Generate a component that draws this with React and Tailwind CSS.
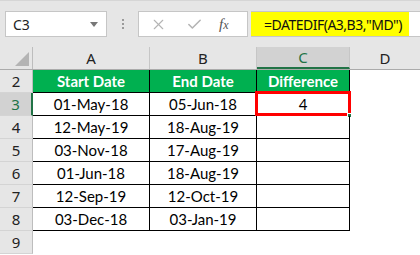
import { X, Check } from 'lucide-react';

const cols = [
  { key: 'A', w: 'w-[117px]' },
  { key: 'B', w: 'w-[107px]' },
  { key: 'C', w: 'w-[93px]' },
];

const rows = [
  ['01-May-18', '05-Jun-18', '4'],
  ['12-May-19', '18-Aug-19', ''],
  ['03-Nov-18', '17-Aug-19', ''],
  ['01-Jun-18', '18-Aug-19', ''],
  ['12-Sep-19', '12-Oct-19', ''],
  ['03-Dec-18', '03-Jan-19', ''],
];

const cellFont = { fontFamily: 'Lato, "Open Sans", sans-serif' };
const uiFont = { fontFamily: '"Noto Sans", "Open Sans", sans-serif' };

function RowHead({ n, active }) {
  return (
    <div
      style={uiFont}
      className={`w-[33px] h-[23px] shrink-0 flex items-center justify-center text-[15px] border-b border-[#d4d4d4] ${
        active
          ? 'bg-[#d2d2d2] text-[#217346] border-r-2 border-r-[#217346]'
          : 'bg-[#e6e6e6] text-[#222] border-r border-r-[#bdbdbd]'
      }`}
    >
      {n}
    </div>
  );
}

export default function App() {
  return (
    <div className="w-[420px] h-[255px] overflow-hidden bg-white select-none">
      {/* formula bar */}
      <div className="h-[47px] bg-[#e6e6e6] border-t border-[#d6d6d6] flex items-center pl-[5px]">
        <div className="w-[102px] h-[26px] bg-white border border-[#c6c6c6] flex items-center justify-between pl-[7px] pr-[8px]">
          <span style={uiFont} className="text-[14px] text-[#222]">C3</span>
          <svg width="8" height="5" viewBox="0 0 8 5"><path d="M0 0h8L4 5z" fill="#777" /></svg>
        </div>
        <div className="w-[31px] flex flex-col items-center gap-[2px]">
          <span className="w-[2px] h-[2px] bg-[#9a9a9a]" />
          <span className="w-[2px] h-[2px] bg-[#9a9a9a]" />
          <span className="w-[2px] h-[2px] bg-[#9a9a9a]" />
        </div>
        <div className="w-[110px] h-[26px] bg-white border border-[#c6c6c6] flex items-center pl-[11px]">
          <X size={17} strokeWidth={1.6} className="text-[#b4b4b4]" />
          <Check size={17} strokeWidth={2.2} className="ml-[19px] text-[#b4b4b4]" />
          <span className="ml-[16px] text-[15px] italic text-[#555]" style={{ fontFamily: '"Liberation Serif", serif' }}>
            f<span className="text-[12px]">x</span>
          </span>
        </div>
        <div className="ml-[3px] flex-1 h-[26px] bg-white border-y border-[#c6c6c6] flex">
          <div style={uiFont} className="w-[158px] bg-[#ffff00] flex items-center pl-[13px] text-[14px] tracking-[-0.5px] text-[#111] whitespace-nowrap">
            =DATEDIF(A3,B3,"MD")
          </div>
        </div>
      </div>

      {/* column headers */}
      <div className="flex h-[23px] bg-[#e6e6e6] border-b border-[#ababab]">
        <div className="w-[33px] shrink-0 border-r border-[#bdbdbd] flex items-end justify-end pr-[3px] pb-[3px]">
          <svg width="14" height="14" viewBox="0 0 14 14"><path d="M14 0v14H0z" fill="#b4b4b4" /></svg>
        </div>
        {cols.map((c) => (
          <div
            key={c.key}
            style={uiFont}
            className={`${c.w} shrink-0 flex items-center justify-center text-[15px] border-r border-[#c6c6c6] ${
              c.key === 'C' ? 'bg-[#d2d2d2] text-[#217346] border-b-2 border-b-[#217346]' : 'text-[#222]'
            }`}
          >
            {c.key}
          </div>
        ))}
        <div style={uiFont} className="flex-1 flex items-center justify-center text-[15px] text-[#222]">D</div>
      </div>

      {/* table head */}
      <div className="flex">
        <RowHead n={2} />
        {['Start Date', 'End Date', 'Difference'].map((t, i) => (
          <div
            key={t}
            style={cellFont}
            className={`${cols[i].w} h-[23px] shrink-0 bg-[#00b050] text-white font-bold text-[15px] flex items-center justify-center border-r border-b border-black`}
          >
            {t}
          </div>
        ))}
      </div>

      {rows.map((r, ri) => (
        <div key={ri} className="flex">
          <RowHead n={ri + 3} active={ri === 0} />
          {r.map((v, ci) => (
            <div
              key={ci}
              style={cellFont}
              className={`${cols[ci].w} h-[23px] shrink-0 relative flex items-center justify-center text-[15px] text-black border-r border-b border-black`}
            >
              {v}
              {ri === 0 && ci === 2 && (
                <>
                  <span className="absolute -left-[2px] -top-[2px] -right-[2px] -bottom-[1px] border-[3px] border-[#ff0000]" />
                  <span className="absolute -right-[3px] -bottom-[3px] w-[5px] h-[5px] bg-[#217346] border border-white" />
                </>
              )}
            </div>
          ))}
        </div>
      ))}

      <div className="flex">
        <RowHead n={9} />
      </div>
    </div>
  );
}
